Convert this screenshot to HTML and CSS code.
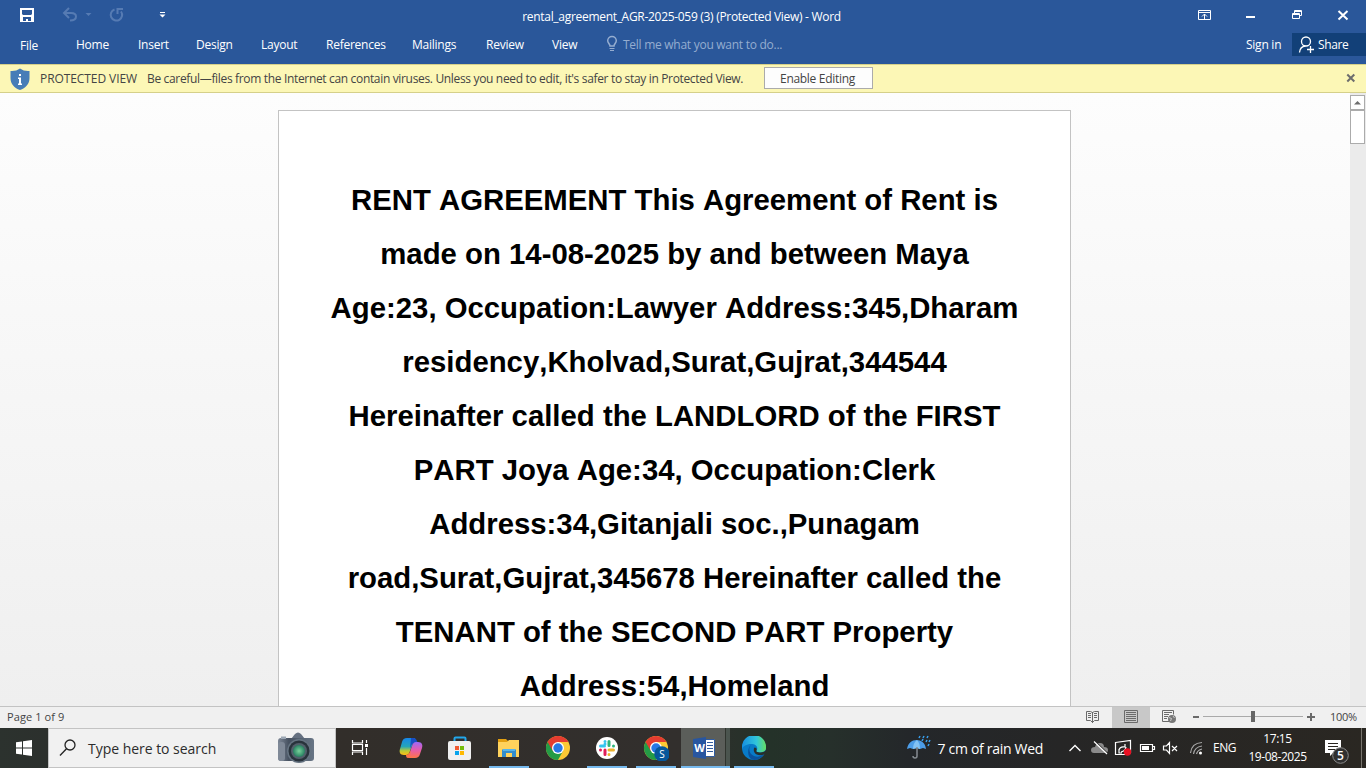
FILE: index.html
```html
<!DOCTYPE html>
<html lang="en">
<head>
<meta charset="utf-8">
<title>rental_agreement_AGR-2025-059 (3) (Protected View) - Word</title>
<link rel="stylesheet" href="styles.css">
</head>
<body>
<div class="app">
  <header class="titlebar">
    <svg class="quick" width="180" height="30">
      <path fill="#fff" d="M20 8h14v14H20z"/><path fill="#2a579a" d="M22 10h10v4l-1 1h-8l-1-1zM23 17h8v4h-3v-2h-2v2h-3z"/>
      <g fill="none" stroke="#567bb3" stroke-width="2"><path d="M69 8l-5 5 5 5M65 13h6q5 0 5 3.500q0 4-6 4"/><path d="M114.500 9.500a5.700 5.700 0 1 0 6.500 2M117.500 14V9h5.500"/></g>
      <path fill="#567bb3" d="M85.500 13h6l-3 3z"/>
      <path fill="#fff" d="M160 12h5v1h-5zM159.500 14.500h6l-3 3z"/>
    </svg>
    <div class="title">rental_agreement_AGR-2025-059 (3) (Protected View) - Word</div>
    <svg class="controls" width="186" height="30" viewBox="1180 0 186 30" fill="none" stroke="#fff">
      <path d="M1198.500 10.500h12v9h-12zM1198.500 12.500h12M1204.500 19v-5M1202 16.500l2.500-2.500 2.500 2.500"/>
      <path stroke-width="2" d="M1246 17h9"/>
      <path d="M1292.500 13.500h7v5h-7zM1292 14.500h8M1294.500 13v-2.500h7v5h-2M1294 11.500h8"/>
      <path stroke-width="2" d="M1338.500 11l9 8.500M1347.500 11l-9 8.500"/>
    </svg>
  </header>
  <nav class="tabs">
    <span class="file">File</span><span>Home</span><span>Insert</span><span>Design</span><span>Layout</span><span>References</span><span>Mailings</span><span>Review</span><span>View</span>
    <svg width="17" height="30" viewBox="606 30 17 30" fill="none" stroke="#95add0" stroke-width="1.500"><path d="M610 46c0-2-2.300-3-2.300-5.200a4.300 4.300 0 0 1 8.600 0c0 2.200-2.300 3.200-2.300 5.200z"/><path stroke-width="1" d="M609.500 48.500h5M610 50.500h4"/></svg>
    <span class="tell">Tell me what you want to do...</span>
    <span class="signin">Sign in</span>
    <span class="share"><svg width="26" height="23" viewBox="0 0 26 23" fill="none" stroke="#fff" stroke-width="1.300"><circle cx="14" cy="8.500" r="4.500"/><path d="M7.500 19.500q.5-6 6-6.500M18.500 13v7M15 16.500h7"/></svg>Share</span>
  </nav>
  <section class="banner">
    <svg width="40" height="27" viewBox="0 65 40 27"><path fill="#477db7" d="M20 68.500q4 3 9.500 2.500v7c0 6-4 10-9.500 12-5.500-2-9.500-6-9.500-12v-7q5.500.5 9.500-2.500z"/><path fill="#fff" d="M19 74h2v2h-2zM18 77.500h3v6h1V85h-4v-1.500h1V79h-1z"/></svg>
    <span class="pv">PROTECTED VIEW</span>
    <span class="warn">Be careful—files from the Internet can contain viruses. Unless you need to edit, it's safer to stay in Protected View.</span>
    <button class="enable">Enable Editing</button>
    <svg class="dismiss" width="10" height="10" stroke="#6d6d6d" stroke-width="2"><path d="M1.300 1.500l7 7M8.300 1.500l-7 7"/></svg>
  </section>
  <main class="workspace">
    <article class="page">
      <p>RENT AGREEMENT This Agreement of Rent is</p>
      <p>made on 14-08-2025 by and between Maya</p>
      <p>Age:23, Occupation:Lawyer Address:345,Dharam</p>
      <p>residency,Kholvad,Surat,Gujrat,344544</p>
      <p>Hereinafter called the LANDLORD of the FIRST</p>
      <p>PART Joya Age:34, Occupation:Clerk</p>
      <p>Address:34,Gitanjali soc.,Punagam</p>
      <p>road,Surat,Gujrat,345678 Hereinafter called the</p>
      <p>TENANT of the SECOND PART Property</p>
      <p>Address:54,Homeland</p>
    </article>
    <div class="scroll">
      <div class="sbtn"><svg width="13" height="13"><path fill="#6d6d6d" d="M3 8.500h7L6.500 5z"/></svg></div>
      <div class="thumb"></div>
      <div class="sbtn down"><svg width="13" height="13"><path fill="#6d6d6d" d="M3 5h7L6.500 8.500z"/></svg></div>
    </div>
  </main>
  <footer class="status">
    <span class="pages">Page 1 of 9</span>
    <svg width="252" height="21" viewBox="1074 707 252 21" fill="none" stroke="#6a6a6a">
      <path fill="#c8c8c8" stroke="none" d="M1112 707h38v21h-38z"/>
      <path d="M1086.500 711.500h4l2 1 2-1h4v9h-4l-2 2-2-2h-4zM1092.500 712v11M1088 713.500h3M1088 715.500h3M1088 717.500h3M1094 713.500h3M1094 715.500h3M1094 717.500h3"/>
      <path d="M1124.500 710.500h13v12h-13zM1126 712.500h10M1126 714.500h10M1126 716.500h10M1126 718.500h10M1126 720.500h10"/>
      <path d="M1169 721.500h-6.500v-11h11v4M1164 712.500h8M1164 714.500h5M1164 716.500h4M1164 718.500h3"/>
      <circle cx="1172" cy="719" r="4" fill="#777" stroke="none"/><path stroke="#ddd" stroke-width=".8" d="M1169 717.500l2.500 1-1 2.500M1173 716l1.500 2"/>
      <path stroke-width="2" d="M1193 717h6M1307 717h8M1311 713v8"/><path stroke="#aaa" d="M1203 716.500h100"/><path fill="#666" stroke="none" d="M1251 711h4v11h-4z"/>
    </svg>
    <span class="zoom">100%</span>
  </footer>
  <div class="taskbar">
    <div class="start"><svg width="16" height="16" fill="#fff"><path d="M0 2.200L6 1.400V7.400H0zM7 1.200L16 0v7.400H7zM0 8.400h6v6.100l-6-.8zM7 8.400h9V16l-9-1.300z"/></svg></div>
    <div class="search">
      <svg width="18" height="18" fill="none" stroke="#222" stroke-width="1.300"><circle cx="11" cy="6" r="5"/><path d="M7.500 9.700L1 16.500"/></svg>
      <span>Type here to search</span>
      <svg class="camera" width="38" height="34">
        <defs><linearGradient id="body"><stop stop-color="#7d8796"/><stop offset=".3" stop-color="#465160"/><stop offset="1" stop-color="#687585"/></linearGradient><radialGradient id="lens"><stop stop-color="#79d29b"/><stop offset="1" stop-color="#278061"/></radialGradient></defs>
        <path fill="#657080" d="M14 8l4-5q3-3 6 0l4 5z"/><rect x="1" y="7" width="36" height="23" rx="3" fill="url(#body)"/><rect x="1" y="11" width="7" height="19" rx="3" fill="#7f8997"/><path fill="#9ba6b3" d="M4 5.500h5V8H4z"/>
        <circle cx="22" cy="20" r="12" fill="#657381"/><circle cx="22" cy="20" r="10.500" fill="#29333c"/><circle cx="22" cy="20" r="8" fill="#52606b"/><circle cx="22" cy="20" r="6" fill="url(#lens)"/>
      </svg>
    </div>
    <div class="taskview"><svg width="18" height="18" fill="none" stroke="#fff" stroke-width="1.200"><path d="M1.500 1v3h10V1M1.500 5.500h10v6h-10zM1.500 16v-3h10v3M15.500 1v3M15.500 9v7"/><path fill="#fff" stroke="none" d="M14 5h3v3h-3z"/></svg></div>
    <div class="task"><svg width="24" height="24" viewBox="0 0 24 24">
      <defs><linearGradient id="c1" x2="0" y2="1"><stop stop-color="#1687ea"/><stop offset=".5" stop-color="#25a5b8"/><stop offset=".75" stop-color="#b7cb39"/><stop offset="1" stop-color="#ffbd13"/></linearGradient><linearGradient id="c2" x2="0" y2="1"><stop stop-color="#9d68f7"/><stop offset=".5" stop-color="#e65cac"/><stop offset="1" stop-color="#ff7447"/></linearGradient></defs>
      <path fill="url(#c1)" d="M8 2h8l-5 13c-1 3-2 4-4 4H5c-4 0-5-3-4-6l2-7q1-4 5-4z"/><path fill="#174fc5" d="M12 2h3q2 0 3 3l.7 2H16q-3 0-4 3l-1 3z"/><path fill="url(#c2)" d="M16 22H9l4-12c1-3 2-4 4-4h2c4 0 5 3 4 6l-2 6q-1 4-5 4z"/><path fill="#ff7448" d="M7 19c3 0 4-3 5-5l-1 6q-1 2-2 2-2 0-2-3z"/></svg></div>
    <div class="task"><svg width="24" height="24"><path fill="none" stroke="#22a7eb" stroke-width="2" d="M6.500 6V2.500q0-1 1-1h9q1 0 1 1V6"/><rect y="5" width="23" height="19" rx="2" fill="#f0f0f0"/><path fill="#f05a31" d="M7 10h4v4H7z"/><path fill="#75bd0b" d="M12 10h4v4h-4z"/><path fill="#08a4ed" d="M7 15h4v4H7z"/><path fill="#ffb900" d="M12 15h4v4h-4z"/></svg></div>
    <div class="task run"><svg width="24" height="24"><path fill="#e4a011" d="M1 3h8l2 2v3H1z"/><path fill="#ffd25c" d="M1 6h9l2-2h10v17H1z"/><path fill="#328dcd" d="M5 21v-7l1-1h12l1 1v7h-4v-4H9v4z"/><path fill="#55b5ed" d="M6 13h12v2H6z"/></svg></div>
    <div class="task"><svg width="24" height="24"><g id="chrome"><circle cx="12" cy="12" r="12" fill="#fcc934"/><path fill="#249b46" d="M12 12L1.600 6A12 12 0 0 0 12 24l5-9z"/><path fill="#e53c30" d="M12 6h10.400A12 12 0 0 0 1.600 6l5.200 9z"/><circle cx="12" cy="12" r="6" fill="#fff"/><circle cx="12" cy="12" r="4.700" fill="#2878e6"/></g></svg></div>
    <div class="task run"><svg width="24" height="24" stroke-width="3" stroke-linecap="round"><circle cx="12" cy="12" r="11" fill="#fff"/><path stroke="#36c5f0" d="M5.500 10h4M10 5.500h0M10 8v0"/><path stroke="#2eb67d" d="M14 5.500v4M18.500 10h0"/><path stroke="#ecb22e" d="M14 14h4.500M14 18.500h0"/><path stroke="#e01e5a" d="M10 14v4.500M5.500 14h0"/></svg></div>
    <div class="task run"><svg width="26" height="26" viewBox="-1 -1 26 26"><use href="#chrome"/><circle cx="18" cy="18" r="7.700" fill="#06579b"/><text class="badge" x="18" y="21.500">S</text></svg></div>
    <div class="task run active"><svg width="24" height="24"><path fill="#fff" stroke="#315c9f" d="M12 3.500h9.500v17H12z"/><path stroke="#315c9f" d="M14 6.500h6M14 9.500h6M14 12.500h6M14 15.500h6"/><path fill="#2856a0" d="M0 3l13-2v22L0 21z"/><text class="wordmark" x="6.500" y="16">W</text></svg></div>
    <div class="task run"><svg width="24" height="24"><defs><linearGradient id="edge"><stop stop-color="#168ee0"/><stop offset=".6" stop-color="#31c5db"/><stop offset="1" stop-color="#65df63"/></linearGradient></defs><circle cx="12" cy="12" r="12" fill="#087bc8"/><path fill="url(#edge)" d="M0 11A12 12 0 0 1 24 11c.5 4-3 5.500-6 5.500-3 0-4.500-1-3.500-2 2-3 0-6-4-6.500C5 7.500 1 10 0 13z"/><path fill="#0a529c" d="M9 9c-3 3-2 9 3 11q5 2 10-2c-3 5-8 7-12 5.500C5 21 5 12 9 9z"/><path fill="#27302c" d="M14.500 14.500c-1 1 .5 2 3.500 2 2.500 0 5-1 6-2.500v3l-2 1.500c-4 1.500-8 .5-9.500-2-1-2-1-4 0-5 2 0 2.500 1.500 2 3z"/></svg></div>
    <div class="weather"><svg width="26" height="26"><path fill="#4c9de8" d="M0 14C1 8 5 5 9.500 5s9 3 9.500 9l-3-1-3 1-3-1-4 1-3-1z"/><path fill="#82c2f4" d="M6 14q0-6 4-9 3 3 3 9l-3-1z"/><path fill="none" stroke="#858b91" stroke-width="1.500" d="M10 12v9q0 2-2 2t-2-2"/><path stroke="#38a0ef" stroke-width="1.500" d="M13 1l-1 2M17 1l-1 2M21 1l-1 2M16 4l-1 2M20 5l-1 2M23 5l-1 2M22 9l-1 2"/></svg><span>7 cm of rain Wed</span></div>
    <svg class="tray" width="144" height="40" viewBox="1064 728 144 40" fill="none" stroke="#fff" stroke-width="1.200">
      <path stroke-width="1.400" d="M1069.500 751l5.500-5.500 5.500 5.500"/>
      <path fill="#8b8b8b" stroke="none" d="M1094 753q-3 0-3-3t4-3q1-4 5-4 4 0 4 4 4 0 4 3t-3 3z"/><path stroke="#222" stroke-width="1" d="M1095 741l13 12.500"/><path d="M1094 741.500l13 12.500"/>
      <path d="M1115.500 742.500l15-2v12l-2 2h-13zM1119 749v4h3M1119 750q1-4 6-3M1125 744v3h-3M1126 747q-.5 4-5 5"/><circle cx="1127.500" cy="752" r="3.700" fill="#e81123" stroke="none"/>
      <path d="M1140.500 744.500h12v7h-12zM1153 746.500h1.500v3h-1.500"/><path fill="#fff" stroke="none" d="M1142 746h7v4h-7z"/>
      <path d="M1163.500 746v4h3l3 3.500v-11l-3 3.500zM1172 746l5 5M1177 746l-5 5"/>
      <path stroke="#aaa" d="M1190.500 753q1-10 11.500-10.500M1193.500 754q1-7 8.500-8M1196.500 754q1-4 5.500-5"/><circle cx="1200.500" cy="753" r="1.500" fill="#fff" stroke="none"/>
    </svg>
    <span class="lang">ENG</span>
    <div class="clock"><span>17:15</span><span>19-08-2025</span></div>
    <svg width="52" height="40" viewBox="1314 728 52 40"><path fill="#fff" d="M1325 740h16v13h-8l-3 3v-3h-5z"/><path stroke="#292621" d="M1328 743.500h10M1328 746.500h10M1328 749.500h7"/><circle cx="1340.500" cy="755.500" r="7.800" fill="#303030" stroke="#8a8a8a"/><text class="count" x="1340.500" y="759.500">5</text><path stroke="#77746d" d="M1361.500 728v40"/></svg>
  </div>
</div>
</body>
</html>
```

FILE: styles.css
```css
* { box-sizing: border-box; }
body { margin: 0; overflow: hidden; font-family: "Open Sans", "Noto Sans", sans-serif; font-size: 12px; }
svg { display: block; flex: none; }
span, .title { white-space: nowrap; }
.app { width: 1366px; height: 768px; display: grid; grid-template-rows: 30px 34px 29px 613px 22px 40px; }
.titlebar { background: #2a579a; color: #fff; display: grid; grid-template-columns: 180px 1003px 183px; line-height: 33px; }
.controls { margin-left: -3px; }
.title { text-align: center; letter-spacing: -.3px; }
.tabs { background: #2a579a; color: #fff; display: grid; grid-template-columns: 56px 62px 58px 65px 65px 86px 74px 66px 54px 17px 1fr 46px 74px; padding-left: 20px; line-height: 30px; letter-spacing: -.25px; }
.tabs .file { padding-top: 1px; }
.tell { color: #95add0; letter-spacing: -.27px; }
.share { background: #124078; height: 23px; margin-top: 3px; line-height: 23px; display: flex; letter-spacing: -.4px; }
.banner { background: #fcf7b6; border-top: 1px solid #d5d08a; border-bottom: 1px solid #d5d08a; color: #444; display: flex; align-items: center; }
.pv { width: 107px; letter-spacing: -.08px; }
.warn { width: 617px; letter-spacing: -.335px; }
.enable { width: 109px; height: 22px; margin-bottom: 1px; border: 1px solid #ababab; background: #fdfdfd; color: #444; font: inherit; padding: 0 2px 0 0; letter-spacing: -.3px; }
.dismiss { margin-left: auto; margin-right: 10px; margin-bottom: 1px; }
.workspace { background: linear-gradient(#fdfdfd, #efefef); display: grid; grid-template-columns: 1fr 793px 279px 16px; overflow: hidden; }
.page { grid-column: 2; margin-top: 17px; padding-top: 62px; height: 640px; background: #fff; border: 1px solid #c3c3c3; text-align: center; font: bold 29.333px/54px "Liberation Sans", Arial, sans-serif; font-kerning: none; color: #000; }
.page p { margin: 0; white-space: nowrap; }
.scroll { grid-column: 4; background: #ebebeb; padding: 2px 1px 2px 0; display: flex; flex-direction: column; }
.sbtn { height: 15px; border: 1px solid #ababab; background: #fff; flex: none; }
.thumb { height: 34px; border: 1px solid #ababab; background: #fff; flex: none; }
.down { margin-top: auto; }
.status { border-top: 1px solid #c3c3c3; background: #f0f0f0; color: #444; display: grid; grid-template-columns: 1067px 256px 1fr; padding-left: 7px; font-size: 11px; line-height: 20px; }
.pages { letter-spacing: .1px; }
.zoom { letter-spacing: -.3px; }
.taskbar { color: #fff; background: linear-gradient(90deg, #2c322e 0, #2c302d 48px, #322e2a 336px, #322f2d 680px, #243229 770px, #26302b 830px, #24272a 910px, #262626 1060px, #2a2722 1366px); display: grid; grid-template-columns: 48px 288px 50.5px repeat(8, 49px) 128px 157.5px 144px 34px 72px 52px; }
.start, .taskview, .task { display: flex; align-items: center; justify-content: center; }
.taskview { padding-right: 2px; }
.search { background: #f1f1f1; border: 1px solid #c3c3c3; color: #2c2c2c; display: flex; align-items: center; padding-left: 10px; font-size: 14px; letter-spacing: -.03px; }
.search span { width: 200px; padding-left: 11px; }
.task.run { background: linear-gradient(#76b9ed, #76b9ed) center bottom / 40px 2px no-repeat; }
.task.active { background: linear-gradient(#76b9ed, #76b9ed) left bottom / 49px 2px no-repeat, linear-gradient(90deg, #5b5e5a 44px, #30352f 44px, #30352f 45px, #4b554f 45px); }
.badge { font: 10px "Open Sans", sans-serif; fill: #fff; text-anchor: middle; }
.wordmark { font: bold 11px "Open Sans", sans-serif; fill: #fff; text-anchor: middle; }
.weather { grid-column: 13; display: flex; align-items: center; gap: 5px; font-size: 14px; letter-spacing: -.3px; }
.lang { line-height: 39px; padding-left: 5px; letter-spacing: -.5px; }
.clock { display: flex; flex-direction: column; text-align: center; line-height: 18px; padding: 2px 1px 0 0; letter-spacing: -.45px; }
.count { font: 600 12px "Open Sans", sans-serif; fill: #fff; text-anchor: middle; }
```
